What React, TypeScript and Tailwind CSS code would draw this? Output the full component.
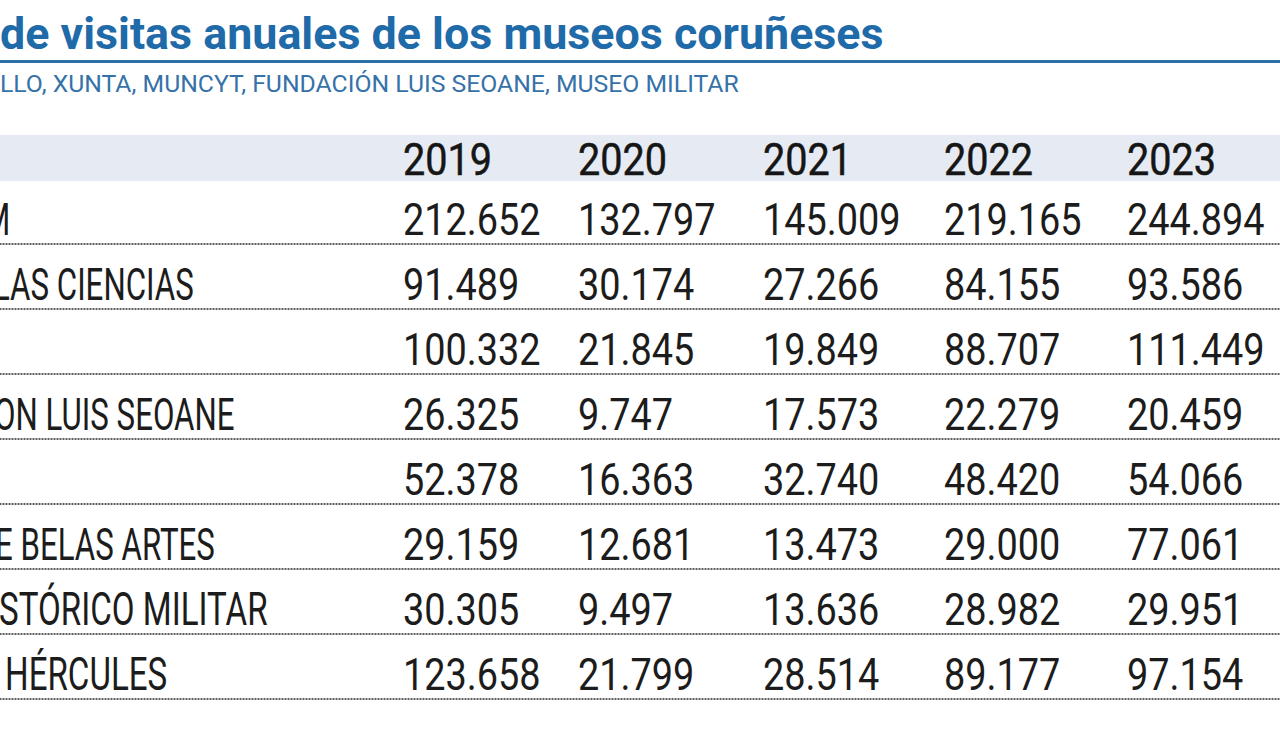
const years = ["2019", "2020", "2021", "2022", "2023"];

const rows = [
  { label: "M", labelClass: "-ml-[17px] text-[44px] scale-x-[0.71]", values: ["212.652", "132.797", "145.009", "219.165", "244.894"] },
  { label: "LAS CIENCIAS", labelClass: "-ml-[7px] text-[44px] scale-x-[0.71]", values: ["91.489", "30.174", "27.266", "84.155", "93.586"] },
  { label: "", labelClass: "", values: ["100.332", "21.845", "19.849", "88.707", "111.449"] },
  { label: "ON LUIS SEOANE", labelClass: "-ml-[6px] text-[44px] scale-x-[0.71]", values: ["26.325", "9.747", "17.573", "22.279", "20.459"] },
  { label: "", labelClass: "", values: ["52.378", "16.363", "32.740", "48.420", "54.066"] },
  { label: "E BELAS ARTES", labelClass: "-ml-[5px] text-[44px] scale-x-[0.71]", values: ["29.159", "12.681", "13.473", "29.000", "77.061"] },
  { label: "STÓRICO MILITAR", labelClass: "-ml-[1px] text-[46px] scale-x-[0.72]", values: ["30.305", "9.497", "13.636", "28.982", "29.951"] },
  { label: "HÉRCULES", labelClass: "ml-[5px] text-[46px] scale-x-[0.72]", values: ["123.658", "21.799", "28.514", "89.177", "97.154"] },
];

const cols = "grid grid-cols-[403px_175px_185px_181px_183px_1fr]";
const dotted =
  "bg-[linear-gradient(90deg,#5e5e5e_0_2px,transparent_2px)] bg-[length:3px_2px] bg-bottom bg-repeat-x";

export default function App() {
  return (
    <div className="w-[1280px] h-[732px] overflow-hidden bg-white font-['Roboto',sans-serif] text-[#1c1c1c]">
      {/* title block */}
      <div className="pt-[12px]">
        <h1 className="whitespace-nowrap text-[44.8px] leading-none font-bold text-[#1f6aa8]">
          de visitas anuales de los museos coruñeses
        </h1>
        <div className="mt-[3px] h-[3px] bg-[#2c6fa8]" />
        <p className="mt-[9px] whitespace-nowrap text-[24.75px] leading-none text-[#3672a8]">
          LLO, XUNTA, MUNCYT, FUNDACIÓN LUIS SEOANE, MUSEO MILITAR
        </p>
      </div>

      {/* table */}
      <div className="mt-[38px]">
        <div className={`${cols} h-[46px] items-start pt-[3px] bg-[#e6ebf3]`}>
          <div />
          {years.map((y) => (
            <div key={y}>
              <span className="inline-block origin-left scale-x-[0.9] text-[44px] leading-none font-normal text-[#161616] [-webkit-text-stroke:0.5px_#161616]">
                {y}
              </span>
            </div>
          ))}
        </div>

        {rows.map((row, i) => (
          <div
            key={i}
            className={`${cols} ${dotted} items-end pb-[3px] ${i === 0 ? "h-[64px]" : "h-[65px]"}`}
          >
            <div className="whitespace-nowrap">
              {row.label && (
                <span className={`inline-block origin-left leading-none ${row.labelClass}`}>
                  {row.label}
                </span>
              )}
            </div>
            {row.values.map((v, j) => (
              <div key={j} className="whitespace-nowrap">
                <span className="inline-block origin-left scale-x-[0.86] text-[44px] leading-none">
                  {v}
                </span>
              </div>
            ))}
          </div>
        ))}
      </div>
    </div>
  );
}
